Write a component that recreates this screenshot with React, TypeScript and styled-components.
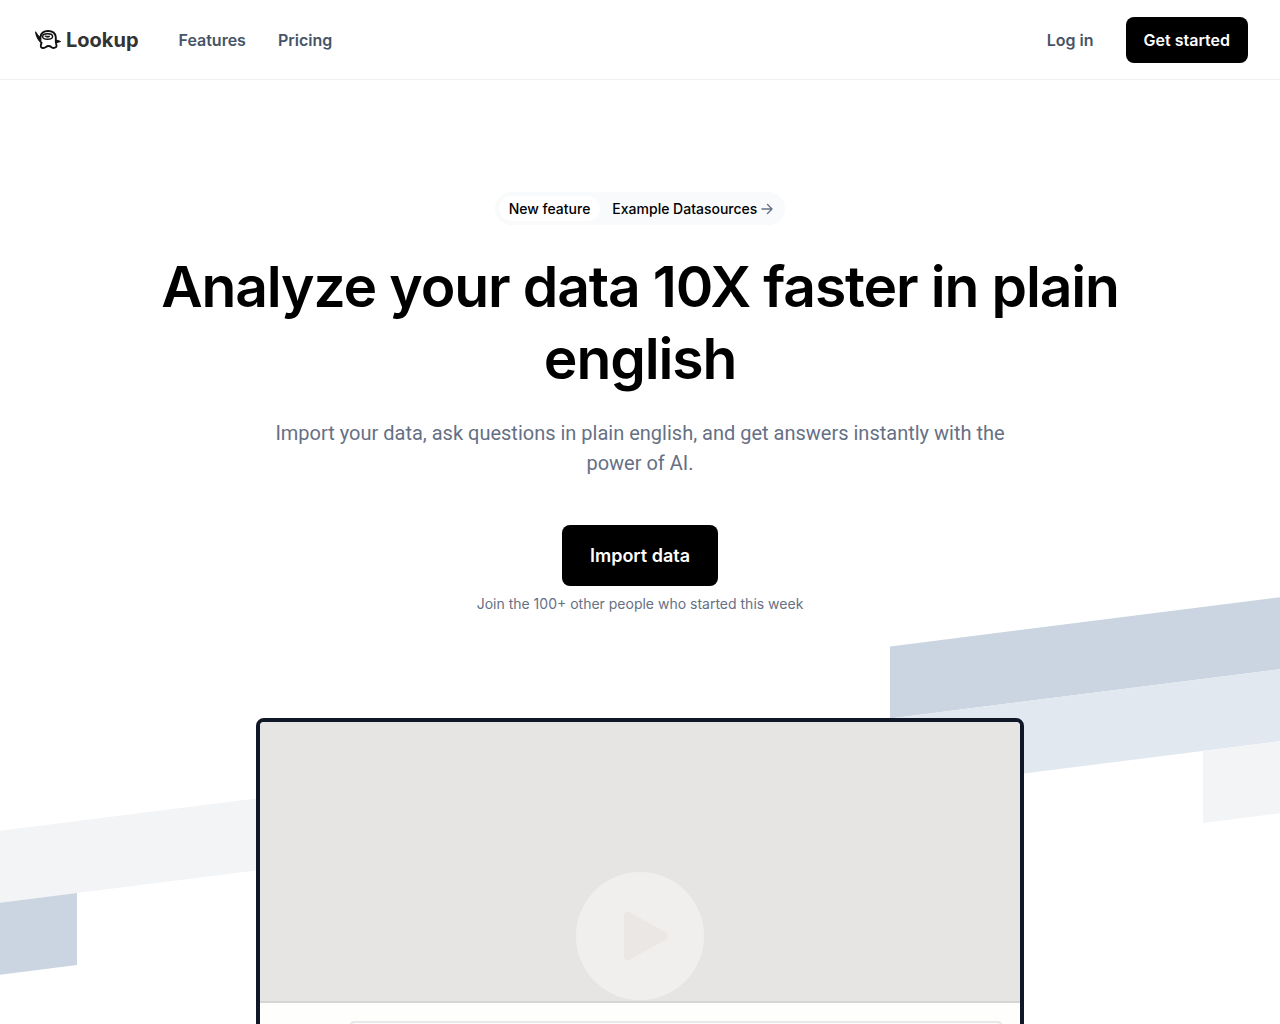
import React from "react";
import styled, { createGlobalStyle } from "styled-components";

const GlobalStyle = createGlobalStyle`
  *, *::before, *::after { box-sizing: border-box; }
  body {
    margin: 0;
    background: #fff;
    color: #000;
    font-family: Inter, "Liberation Sans", sans-serif;
    -webkit-font-smoothing: antialiased;
  }
  a { color: inherit; text-decoration: none; }
  h1, p { margin: 0; }
`;

const Page = styled.div`
  overflow-x: clip;
`;

const Header = styled.header`
  display: flex;
  align-items: center;
  justify-content: space-between;
  height: 80px;
  padding: 0 32px;
  border-bottom: 1px solid #f2f2f3;
`;

const Group = styled.div<{ $gap: number }>`
  display: flex;
  align-items: center;
  gap: ${({ $gap }) => $gap}px;
`;

const Brand = styled.a`
  display: flex;
  align-items: center;
  gap: 4px;
  padding-left: 2px;
  color: #333;
  font: 700 20px/28px Inter, sans-serif;
`;

const Nav = styled.nav`
  display: flex;
  gap: 32px;
`;

const TextLink = styled.a`
  color: #475467;
  font-size: 16px;
  line-height: 24px;
  font-weight: 600;
`;

const Button = styled.button<{ $large?: boolean }>`
  border: 0;
  border-radius: 8px;
  background: #000;
  color: #fff;
  font-family: inherit;
  font-weight: 600;
  font-size: ${({ $large }) => ($large ? 18 : 16)}px;
  line-height: ${({ $large }) => ($large ? 28 : 24)}px;
  padding: ${({ $large }) => ($large ? "17px 28px 16px" : "11px 18px")};
  cursor: pointer;
`;

const Hero = styled.section`
  display: flex;
  flex-direction: column;
  align-items: center;
  padding: 112px 32px 0;
  text-align: center;
`;

const Announcement = styled.a`
  display: flex;
  align-items: center;
  gap: 12px;
  padding: 4px 12px 4px 4px;
  border-radius: 17px;
  background: #f9fafb;
  font-size: 14px;
  line-height: 20px;
  font-weight: 500;
`;

const Tag = styled.span`
  padding: 3px 10px 2px;
  border-radius: 13px;
  background: #fff;
`;

const Title = styled.h1`
  max-width: 1024px;
  margin-top: 26px;
  font-size: 57px;
  line-height: 72px;
  font-weight: 600;
  letter-spacing: -0.02em;
`;

const Lead = styled.p`
  max-width: 768px;
  margin-top: 23px;
  color: #667085;
  font-family: Roboto, sans-serif;
  font-size: 20px;
  line-height: 30px;
`;

const Actions = styled.div`
  display: flex;
  flex-direction: column;
  align-items: center;
  gap: 8px;
  margin-top: 47px;
`;

const Note = styled.p`
  color: #667085;
  font-size: 14px;
  line-height: 20px;
`;

const Showcase = styled.section`
  position: relative;
  display: flex;
  justify-content: center;
  margin-top: 104px;
  padding: 0 32px;
`;

const Stripes = styled.div`
  position: absolute;
  top: -40px;
  left: 0;
  right: 0;
  transform: skewY(-7.2deg);
`;

const StripeRow = styled.div`
  display: flex;
  justify-content: space-between;
  height: 72px;
`;

const Stripe = styled.div<{ $width: number; $color?: string }>`
  width: ${({ $width }) => $width}%;
  background: ${({ $color }) => $color ?? "transparent"};
`;

const Player = styled.div`
  position: relative;
  display: flex;
  flex-direction: column;
  width: 100%;
  max-width: 768px;
  aspect-ratio: 768 / 436;
  overflow: hidden;
  border: 4px solid #101828;
  border-radius: 8px;
  background: #fefefd;
`;

const Frame = styled.div`
  flex: 0 0 281px;
  border-bottom: 2px solid #d6d5d3;
  background: #e6e5e3;
`;

const Field = styled.div`
  flex: 1;
  margin: 18px 18px 18px 90px;
  border: 2px solid #e8e8ea;
  border-radius: 4px;
`;

const PlayOverlay = styled.div`
  position: absolute;
  inset: 0;
  display: flex;
  align-items: center;
  justify-content: center;
`;

const PlayButton = styled.button`
  display: flex;
  width: 128px;
  height: 128px;
  padding: 0;
  border: 0;
  border-radius: 50%;
  background: #f0efed;
  cursor: pointer;
`;

const Mascot = () => (
  <svg width="28" height="22" viewBox="0 0 28 22" fill="none" stroke="#111" strokeLinecap="round" strokeLinejoin="round" aria-hidden="true">
    <path d="M6.500 8C7 4 10 2 14 2s7.300 2 7.800 6c.1 2.500-.3 4.500.3 6.500.5 1.500.8 3-.3 3.800-1.500.9-3.200.6-4.300-.1-.9-.7-1.600-1.200-2.900-1.200s-2.100.5-3.100 1.200c-1.400.9-3.400 1.100-4.400-.1-.9-1.200.1-2.700.4-4.300" strokeWidth="1.900" />
    <path d="M1.600 3c.6 4 2.200 7.600 5.200 10.400V8.800C4.400 7.600 2.800 5.600 1.600 3Z" fill="#111" strokeWidth="1.200" />
    <path d="M22 11c1.400.2 3 .8 4.600 1.500-1.500.6-3 1-4.600 1.100Z" fill="#111" strokeWidth="1" />
    <ellipse cx="13.600" cy="7.500" rx="5" ry="2.700" strokeWidth="1.400" />
    <path d="M11.200 7.200h4.800c-.5 1.300-4.200 1.300-4.800 0Z" fill="#111" strokeWidth=".8" />
  </svg>
);

const Arrow = () => (
  <svg width="12" height="12" viewBox="0 0 12 12" fill="none" stroke="#667085" strokeWidth="1.4" strokeLinecap="round" strokeLinejoin="round" aria-hidden="true">
    <path d="M1 6h10M6.500 1.500 11 6l-4.500 4.500" />
  </svg>
);

const PlayIcon = () => (
  <svg width="128" height="128" viewBox="0 0 128 128" aria-hidden="true">
    <path d="M48 44c0-3.600 3.200-5.200 6.200-3.600l35.600 20c3 1.700 3 5.500 0 7.200l-35.600 20c-3 1.600-6.200 0-6.200-3.600Z" fill="#ebe7e4" />
  </svg>
);

export default function App() {
  return (
    <Page>
      <GlobalStyle />
      <Header>
        <Group $gap={40}>
          <Brand href="#">
            <Mascot />
            Lookup
          </Brand>
          <Nav>
            <TextLink href="#features">Features</TextLink>
            <TextLink href="#pricing">Pricing</TextLink>
          </Nav>
        </Group>
        <Group $gap={32}>
          <TextLink href="#login">Log in</TextLink>
          <Button type="button">Get started</Button>
        </Group>
      </Header>
      <main>
        <Hero>
          <Announcement href="#datasources">
            <Tag>New feature</Tag>
            <Group $gap={4}>
              Example Datasources
              <Arrow />
            </Group>
          </Announcement>
          <Title>Analyze your data 10X faster in plain english</Title>
          <Lead>
            Import your data, ask questions in plain english, and get answers instantly with the power of AI.
          </Lead>
          <Actions>
            <Button type="button" $large>Import data</Button>
            <Note>Join the 100+ other people who started this week</Note>
          </Actions>
        </Hero>
        <Showcase>
          <Stripes aria-hidden="true">
            <StripeRow>
              <Stripe $width={0} />
              <Stripe $width={30.5} $color="#cbd5e1" />
            </StripeRow>
            <StripeRow>
              <Stripe $width={30.5} $color="#f3f4f6" />
              <Stripe $width={30.5} $color="#e2e8f0" />
            </StripeRow>
            <StripeRow>
              <Stripe $width={6} $color="#cbd5e1" />
              <Stripe $width={6} $color="#f3f4f6" />
            </StripeRow>
          </Stripes>
          <Player>
            <Frame />
            <Field />
            <PlayOverlay>
              <PlayButton type="button" aria-label="Play video">
                <PlayIcon />
              </PlayButton>
            </PlayOverlay>
          </Player>
        </Showcase>
      </main>
    </Page>
  );
}
